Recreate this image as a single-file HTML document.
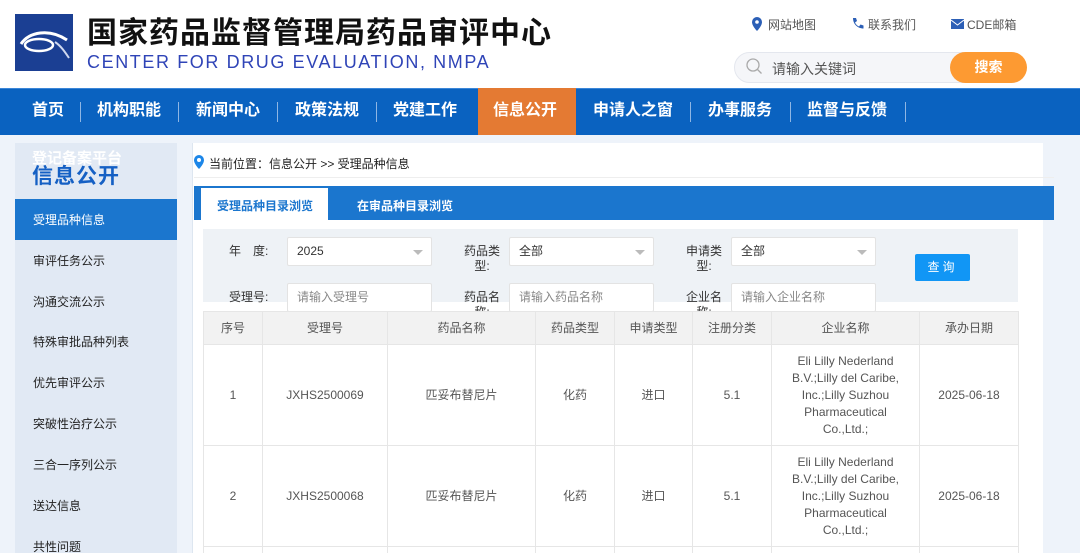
<!DOCTYPE html>
<html style="width:1080px;height:553px;overflow:hidden"><head><meta charset="utf-8"><style>
*{margin:0;padding:0;box-sizing:border-box}
body{width:1080px;height:553px;overflow:hidden;background:#eef3fa;font-family:"Liberation Sans","Noto Sans CJK SC",sans-serif;position:relative;color:#333}
.a{position:absolute}
#hdr{left:0;top:0;width:1080px;height:88px;background:#fff}
#nav{left:0;top:88px;width:1080px;height:47px;background:#0a62c0;border-top:1px solid #3a86d8}
#nav span{position:absolute;top:0;height:46px;line-height:44px;color:#fff;font-weight:bold;font-size:16px}
.sep{position:absolute;top:13px;width:1px;height:20px;background:#8fb6e4}
#side{left:15px;top:143px;width:162px;height:410px;background:#e1e9f4;overflow:hidden}
.si{position:absolute;left:18px;font-size:12px;color:#222}
#main{left:192px;top:143px;width:851px;height:410px;background:#fff;border-left:1px solid #dde6f0}
#tw{position:absolute;left:203px;top:311px;width:816px;height:242px;overflow:hidden}
table{border-collapse:collapse;font-size:12px;color:#555;table-layout:fixed}
td,th{border:1px solid #e6e6e6;text-align:center;font-weight:normal;line-height:17px}
th{background:#f2f2f2;height:33px;color:#555}
td{height:101px}
td.c{padding:0 10px}
.inp{position:absolute;background:#fff;border:1px solid #e3e3e3;border-radius:2px;height:29px;font-size:12px;line-height:27px;padding-left:9px;color:#333}
.ph{color:#888}
.lbl{position:absolute;font-size:12px;color:#333;text-align:center;line-height:15px}
.tri{position:absolute;right:8px;top:12px;border-left:5px solid transparent;border-right:5px solid transparent;border-top:5px solid #bbb}
</style></head><body>
<div id="hdr" class="a">
 <div class="a" style="left:15px;top:14px;width:58px;height:57px;background:#1b3f93">
  <svg width="58" height="57" viewBox="0 0 58 57"><path d="M6 30 C14 18 34 14 52 26" stroke="#fff" stroke-width="3" fill="none"/><ellipse cx="24" cy="31" rx="14" ry="6" stroke="#fff" stroke-width="2.5" fill="none"/><path d="M40 28 C46 32 50 38 54 44" stroke="#cfd8ef" stroke-width="2" fill="none"/></svg>
 </div>
 <div class="a" style="left:87px;top:8px;font-size:30px;font-weight:bold;color:#111;letter-spacing:1px;white-space:nowrap">国家药品监督管理局药品审评中心</div>
 <div class="a" style="left:87px;top:52px;font-size:18px;color:#2f44b7;letter-spacing:1.6px;white-space:nowrap">CENTER FOR DRUG EVALUATION, NMPA</div>
 <svg class="a" style="left:752px;top:17px" width="10" height="14" viewBox="0 0 10 14"><path d="M5 0a5 5 0 0 0-5 5c0 4 5 9 5 9s5-5 5-9a5 5 0 0 0-5-5z" fill="#2c5fb6"/><circle cx="5" cy="5" r="1.8" fill="#fff"/></svg>
 <div class="a" style="left:768px;top:16px;font-size:12px;color:#555">网站地图</div>
 <svg class="a" style="left:851px;top:17px" width="13" height="13" viewBox="0 0 13 13"><path d="M2 1l3 0 1 3-2 1.5c1 2 2 3 4 4l1.5-2 3 1 0 3c-6 0-10.5-4.5-10.5-10.5z" fill="#2c5fb6"/></svg>
 <div class="a" style="left:868px;top:16px;font-size:12px;color:#555">联系我们</div>
 <svg class="a" style="left:951px;top:19px" width="13" height="10" viewBox="0 0 13 10"><rect width="13" height="10" fill="#2c5fb6"/><path d="M0 1l6.5 5 6.5-5" stroke="#fff" fill="none"/></svg>
 <div class="a" style="left:967px;top:16px;font-size:12px;color:#555">CDE邮箱</div>
 <div class="a" style="left:734px;top:52px;width:292px;height:31px;border-radius:16px;background:#f5f6f9;border:1px solid #e4e7ee"></div>
 <svg class="a" style="left:746px;top:58px" width="17" height="17" viewBox="0 0 17 17"><circle cx="7" cy="7" r="6" stroke="#aaa" stroke-width="1.3" fill="none"/><path d="M11.5 11.5l4 4" stroke="#aaa" stroke-width="1.3"/></svg>
 <div class="a" style="left:772px;top:59px;font-size:14px;color:#555">请输入关键词</div>
 <div class="a" style="left:950px;top:52px;width:77px;height:31px;border-radius:16px;background:#fd9a32;color:#fff;font-size:14px;line-height:31px;text-align:center;font-weight:bold">搜索</div>
</div>
<div id="nav" class="a">
 <span style="left:32px">首页</span><i class="sep" style="left:80px"></i>
 <span style="left:97px">机构职能</span><i class="sep" style="left:178px"></i>
 <span style="left:196px">新闻中心</span><i class="sep" style="left:277px"></i>
 <span style="left:295px">政策法规</span><i class="sep" style="left:376px"></i>
 <span style="left:393px">党建工作</span>
 <div class="a" style="left:478px;top:-1px;width:98px;height:47px;background:#e47a33"></div>
 <span style="left:493px">信息公开</span>
 <span style="left:593px">申请人之窗</span><i class="sep" style="left:690px"></i>
 <span style="left:708px">办事服务</span><i class="sep" style="left:790px"></i>
 <span style="left:807px">监督与反馈</span><i class="sep" style="left:905px"></i>
</div>
<div id="side" class="a">
 <div class="a" style="left:17px;top:4px;font-size:15px;font-weight:bold;color:#fff">登记备案平台</div>
 <div class="a" style="left:17px;top:17px;font-size:21px;font-weight:bold;color:#1560c4;letter-spacing:1px">信息公开</div>
 <div class="a" style="left:0;top:56px;width:162px;height:41px;background:#1b76ce"></div>
 <div class="si" style="top:68px;color:#fff">受理品种信息</div>
 <div class="si" style="top:109px">审评任务公示</div>
 <div class="si" style="top:150px">沟通交流公示</div>
 <div class="si" style="top:190px">特殊审批品种列表</div>
 <div class="si" style="top:231px">优先审评公示</div>
 <div class="si" style="top:272px">突破性治疗公示</div>
 <div class="si" style="top:313px">三合一序列公示</div>
 <div class="si" style="top:354px">送达信息</div>
 <div class="si" style="top:395px">共性问题</div>
</div>
<div id="main" class="a"></div>
<svg class="a" style="left:194px;top:155px" width="10" height="14" viewBox="0 0 10 14"><path d="M5 0a5 5 0 0 0-5 5c0 4 5 9 5 9s5-5 5-9a5 5 0 0 0-5-5z" fill="#1c86e8"/><circle cx="5" cy="5" r="2" fill="#fff"/></svg>
<div class="a" style="left:209px;top:155px;font-size:12px;color:#222">当前位置：信息公开 &gt;&gt; 受理品种信息</div>
<div class="a" style="left:194px;top:177px;width:860px;height:1px;background:#eee"></div>
<div class="a" style="left:194px;top:186px;width:860px;height:34px;background:#1b76ce"></div>
<div class="a" style="left:201px;top:188px;width:127px;height:32px;background:#fff"></div>
<div class="a" style="left:217px;top:197px;font-size:12px;font-weight:bold;color:#1b76ce">受理品种目录浏览</div>
<div class="a" style="left:357px;top:197px;font-size:12px;font-weight:bold;color:#fff">在审品种目录浏览</div>
<div class="a" style="left:203px;top:229px;width:815px;height:73px;background:#eef2f6"></div>
<div class="lbl" style="left:229px;top:244px">年　度:</div>
<div class="inp" style="left:287px;top:237px;width:145px">2025<i class="tri"></i></div>
<div class="lbl" style="left:462px;top:244px;width:40px">药品类<br>型:</div>
<div class="inp" style="left:509px;top:237px;width:145px">全部<i class="tri"></i></div>
<div class="lbl" style="left:684px;top:244px;width:40px">申请类<br>型:</div>
<div class="inp" style="left:731px;top:237px;width:145px">全部<i class="tri"></i></div>
<div class="a" style="left:915px;top:254px;width:55px;height:27px;background:#1196f5;border-radius:2px;color:#fff;font-size:12px;line-height:27px;text-align:center;letter-spacing:3px">查询</div>
<div class="lbl" style="left:229px;top:290px">受理号:</div>
<div class="inp ph" style="left:287px;top:283px;width:145px">请输入受理号</div>
<div class="lbl" style="left:462px;top:290px;width:40px">药品名<br>称:</div>
<div class="inp ph" style="left:509px;top:283px;width:145px">请输入药品名称</div>
<div class="lbl" style="left:684px;top:290px;width:40px">企业名<br>称:</div>
<div class="inp ph" style="left:731px;top:283px;width:145px">请输入企业名称</div>
<div id="tw"><table>
<colgroup><col style="width:59px"><col style="width:125px"><col style="width:148px"><col style="width:79px"><col style="width:78px"><col style="width:79px"><col style="width:148px"><col style="width:99px"></colgroup>
<tr><th>序号</th><th>受理号</th><th>药品名称</th><th>药品类型</th><th>申请类型</th><th>注册分类</th><th>企业名称</th><th>承办日期</th></tr>
<tr><td>1</td><td>JXHS2500069</td><td>匹妥布替尼片</td><td>化药</td><td>进口</td><td>5.1</td><td class="c">Eli Lilly Nederland B.V.;Lilly del Caribe, Inc.;Lilly Suzhou Pharmaceutical Co.,Ltd.;</td><td>2025-06-18</td></tr>
<tr><td>2</td><td>JXHS2500068</td><td>匹妥布替尼片</td><td>化药</td><td>进口</td><td>5.1</td><td class="c">Eli Lilly Nederland B.V.;Lilly del Caribe, Inc.;Lilly Suzhou Pharmaceutical Co.,Ltd.;</td><td>2025-06-18</td></tr>
<tr><td></td><td></td><td></td><td></td><td></td><td></td><td></td><td></td></tr>
</table></div>
</body></html>
